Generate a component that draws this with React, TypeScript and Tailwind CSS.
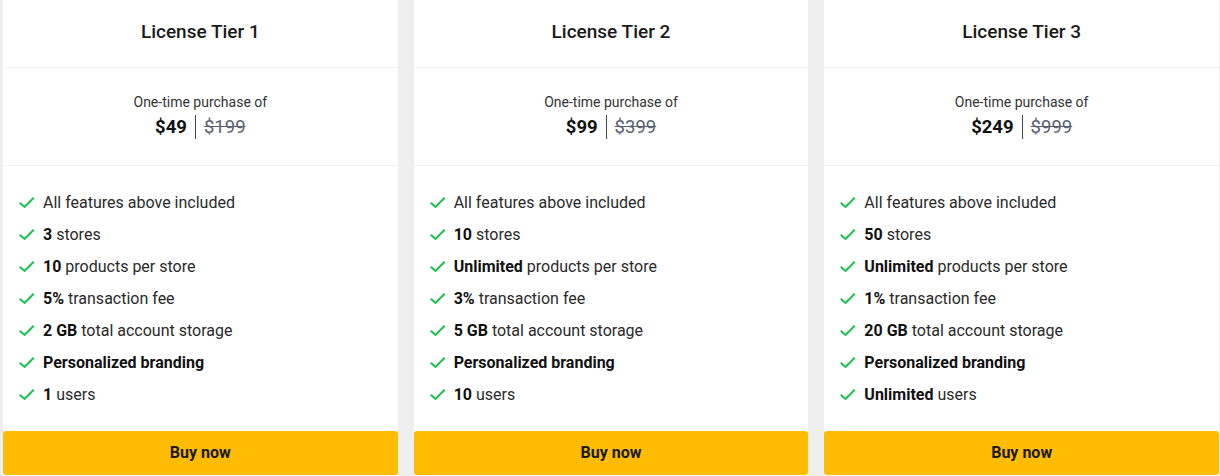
import React from "react";

type Feature = { b?: string; t?: string };
type Tier = { name: string; price: string; old: string; features: Feature[] };

const tiers: Tier[] = [
  {
    name: "License Tier 1",
    price: "$49",
    old: "$199",
    features: [
      { t: "All features above included" },
      { b: "3", t: " stores" },
      { b: "10", t: " products per store" },
      { b: "5%", t: " transaction fee" },
      { b: "2 GB", t: " total account storage" },
      { b: "Personalized branding" },
      { b: "1", t: " users" },
    ],
  },
  {
    name: "License Tier 2",
    price: "$99",
    old: "$399",
    features: [
      { t: "All features above included" },
      { b: "10", t: " stores" },
      { b: "Unlimited", t: " products per store" },
      { b: "3%", t: " transaction fee" },
      { b: "5 GB", t: " total account storage" },
      { b: "Personalized branding" },
      { b: "10", t: " users" },
    ],
  },
  {
    name: "License Tier 3",
    price: "$249",
    old: "$999",
    features: [
      { t: "All features above included" },
      { b: "50", t: " stores" },
      { b: "Unlimited", t: " products per store" },
      { b: "1%", t: " transaction fee" },
      { b: "20 GB", t: " total account storage" },
      { b: "Personalized branding" },
      { b: "Unlimited", t: " users" },
    ],
  },
];

function Check() {
  return (
    <svg width="16" height="16" viewBox="0 0 16 16" className="shrink-0">
      <path d="M1.5 8.5 L5.5 12 L14 3.5" fill="none" stroke="#16c04a" strokeWidth="2" strokeLinecap="square" />
    </svg>
  );
}

export default function App() {
  return (
    <div
      className="w-[1220px] h-[476px] bg-[#efefef] pl-[3px] pr-[1px] grid grid-cols-3 gap-4 overflow-hidden"
      style={{ fontFamily: "Roboto, 'Liberation Sans', sans-serif" }}
    >
      {tiers.map((tier) => (
        <div key={tier.name} className="bg-white flex flex-col h-[476px]">
          <div className="h-[68px] border-b border-[#f1f1f1] flex items-center justify-center pb-[2px]">
            <h2 className="text-[19px] font-medium text-[#1a1a1a]">{tier.name}</h2>
          </div>
          <div className="h-[98px] border-b border-[#f1f1f1] flex flex-col items-center pt-[25px]">
            <div className="text-[14px] leading-[18px] text-[#333]">One-time purchase of</div>
            <div className="flex items-center mt-[4px] text-[18.5px] leading-[24px]">
              <span className="font-bold text-[#111] pr-[8px] border-r border-[#444]">{tier.price}</span>
              <span className="pl-[8px] text-[#5a6170] line-through">{tier.old}</span>
            </div>
          </div>
          <ul className="flex flex-col pt-[27px] pl-[16px] gap-[12px]">
            {tier.features.map((f, i) => (
              <li key={i} className="flex items-center gap-[8px] h-[20px] text-[16px] text-[#2a2a2a]">
                <Check />
                <span>
                  {f.b && <b className="font-bold text-[#111]">{f.b}</b>}
                  {f.t}
                </span>
              </li>
            ))}
          </ul>
          <div className="flex-1" />
          <button className="h-[44px] mb-[1px] bg-[#ffbc00] rounded-[3px] text-[16px] font-bold text-[#1a1a1a]">
            Buy now
          </button>
        </div>
      ))}
    </div>
  );
}
